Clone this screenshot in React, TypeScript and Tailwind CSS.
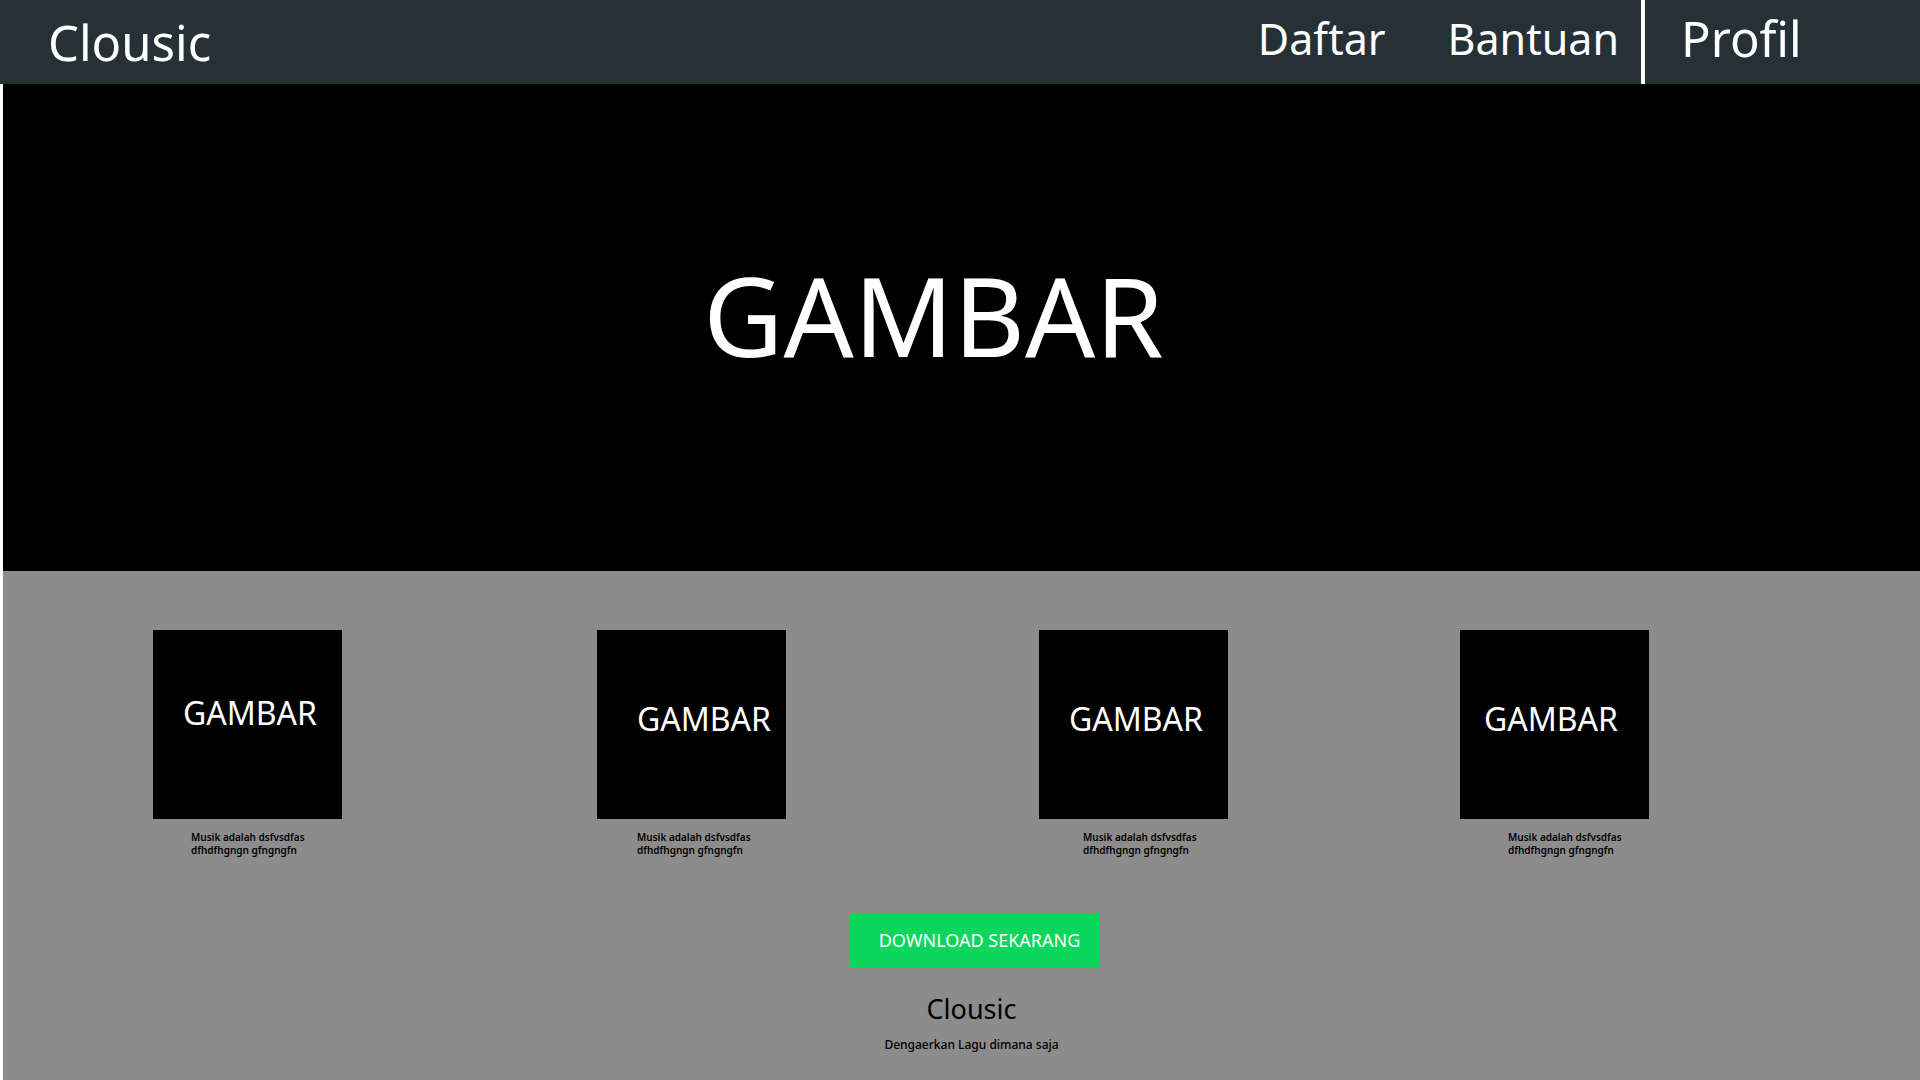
const cards = [
  { id: 1, image: "pl-[30px] pb-6", caption: "pl-[38px]" },
  { id: 2, image: "pl-10 pb-3", caption: "pl-10" },
  { id: 3, image: "pl-[30px] pb-3", caption: "pl-11" },
  { id: 4, image: "pl-6 pb-3", caption: "pl-12" },
];

function Header() {
  return (
    <header className="flex h-[84px] items-stretch justify-between bg-[#263137] pl-12 text-white">
      <a href="#" className="flex items-center text-[49px] leading-none">
        Clousic
      </a>
      <nav className="flex items-stretch text-[43px] leading-none">
        <a href="#daftar" className="mr-[62px] flex items-center pb-2">
          Daftar
        </a>
        <a href="#bantuan" className="mr-[22px] flex items-center pb-2">
          Bantuan
        </a>
        <a
          href="#profil"
          className="flex w-[279px] items-center border-l-4 border-white pb-2 pl-9 text-[49px]"
        >
          Profil
        </a>
      </nav>
    </header>
  );
}

export default function App() {
  return (
    <div className="flex min-h-screen flex-col bg-white font-['Noto_Sans',sans-serif]">
      <Header />
      <main className="flex flex-1 flex-col border-l-[3px] border-white">
        <section className="flex min-h-[487px] items-center justify-center bg-black pr-14 pb-7">
          <h1 className="text-[110px] leading-none text-white">GAMBAR</h1>
        </section>

        <section className="flex flex-1 flex-col bg-[#8c8c8c] pt-[59px] text-black">
          <div className="grid grid-cols-[444fr_442fr_421fr_460fr] pl-[150px]">
            {cards.map((card) => (
              <figure key={card.id} className="w-[189px]">
                <div
                  className={`flex aspect-square items-center bg-black text-[32px] leading-none text-white ${card.image}`}
                >
                  GAMBAR
                </div>
                <figcaption
                  className={`mt-3 text-[10px] leading-[13px] font-semibold whitespace-nowrap ${card.caption}`}
                >
                  Musik adalah dsfvsdfas
                  <br />
                  dfhdfhgngn gfngngfn
                </figcaption>
              </figure>
            ))}
          </div>

          <div className="flex flex-col items-center pl-6">
            <button
              type="button"
              className="mt-14 h-[54px] w-[250px] bg-[#0cd65c] pl-3 text-[18px] whitespace-nowrap text-white"
            >
              DOWNLOAD SEKARANG
            </button>
            <h2 className="mt-6 pr-1 text-[27px] leading-9">Clousic</h2>
            <p className="mt-2 pr-1 text-[12px] leading-5 font-medium">
              Dengaerkan Lagu dimana saja
            </p>
          </div>
        </section>
      </main>
    </div>
  );
}
